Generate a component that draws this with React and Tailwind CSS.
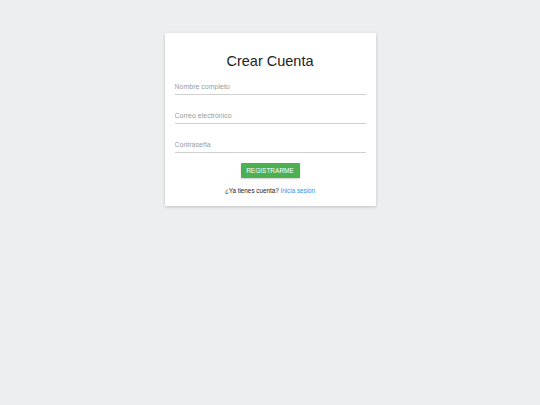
import React from "react";

export default function App() {
  return (
    <div className="min-h-[405px] bg-[#eceef0] flex justify-center items-start pt-[33px]" style={{ fontFamily: '"Liberation Sans", Arial, sans-serif' }}>
      <div className="w-[211px] bg-white shadow-[0_1px_3px_rgba(0,0,0,0.2)] px-[10px] pt-[19px] pb-[10px] flex flex-col">
        <h1 className="text-center text-[14.5px] leading-[18px] text-[#222] mb-[8px]">Crear Cuenta</h1>
        <div className="flex flex-col gap-[12px]">
          <input className="h-[17px] w-full border-0 border-b border-[#d0d0d0] outline-none text-[7px] text-[#333] placeholder:text-[#9a9a9a] bg-transparent p-0" placeholder="Nombre completo" />
          <input className="h-[17px] w-full border-0 border-b border-[#d0d0d0] outline-none text-[7px] text-[#333] placeholder:text-[#9a9a9a] bg-transparent p-0" placeholder="Correo electrónico" />
          <input type="password" className="h-[17px] w-full border-0 border-b border-[#d0d0d0] outline-none text-[7px] text-[#333] placeholder:text-[#9a9a9a] bg-transparent p-0" placeholder="Contraseña" />
        </div>
        <div className="flex justify-center mt-[10px]">
          <button className="h-[15px] w-[59px] bg-[#4caf50] text-white text-[6.5px] rounded-[1px] shadow-[0_1px_2px_rgba(0,0,0,0.2)]">REGISTRARME</button>
        </div>
        <p className="text-center text-[6.3px] leading-[10px] text-[#222] mt-[8px]">
          ¿Ya tienes cuenta? <span className="text-[#2196f3]">Inicia sesión</span>
        </p>
      </div>
    </div>
  );
}
